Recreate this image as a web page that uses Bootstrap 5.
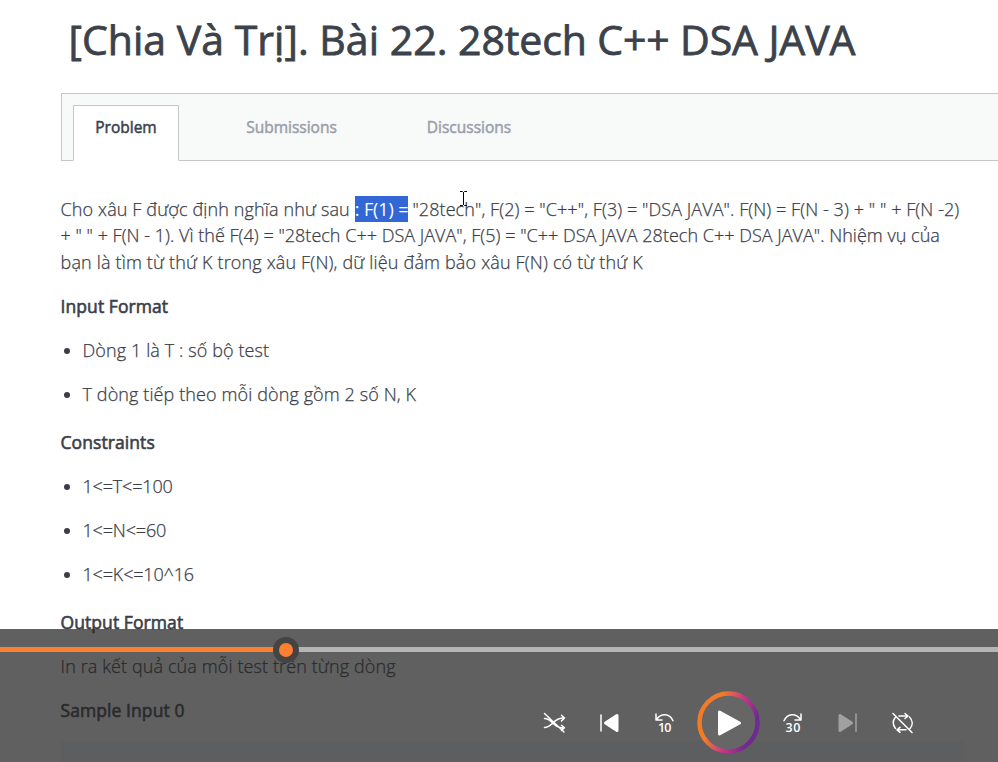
<!DOCTYPE html>
<html lang="vi">
<head>
<meta charset="utf-8">
<meta name="viewport" content="width=device-width, initial-scale=1">
<title>[Chia Và Trị]. Bài 22. 28tech C++ DSA JAVA</title>
<link href="https://cdn.jsdelivr.net/npm/bootstrap@5.3.0/dist/css/bootstrap.min.css" rel="stylesheet">
<style>
body{font-family:"Open Sans","Noto Sans",sans-serif;color:#3b3e48;width:998px;height:762px;overflow:hidden;background:#fff}
.page-title{font-size:41px;line-height:56px;font-weight:400;letter-spacing:-.12px;-webkit-text-stroke:.8px #3c424b;padding:11px 0 0 68.500px;height:93px;color:#3c424b}
.title-start{letter-spacing:.02px}
.tab-strip{margin-left:61px;height:68px;background:#f8f9f9;border:1px solid #c4c6ca;border-right:0;padding:11px 0 0 11px}
.tab-strip .nav-link{font-size:15.5px;line-height:22px;font-weight:400;-webkit-text-stroke:.5px;color:#9a9fab;border-radius:0;border:1px solid transparent;padding:10px 0 0;height:56px;text-align:center;margin:0}
.tab-strip .nav-link.active{color:#39424e;border-color:#c4c6ca #c4c6ca #fff;background:#fff}
.tab-a{width:106px}.tab-b{width:225px}.tab-c{width:130px}
.statement{padding:35px 0 0 60.500px;font-size:18px;font-weight:300;line-height:26.4px;-webkit-text-stroke:.25px}
.statement p{margin:0;white-space:nowrap}
.statement h2{font-size:17.5px;font-weight:400;line-height:26px;margin:0;-webkit-text-stroke:.6px;letter-spacing:.08px}
.statement ul{padding-left:22px;margin:0}
.statement li{height:44px;line-height:26px}
.l1{letter-spacing:.075px}
.lead-in{letter-spacing:.13px}
.l2{letter-spacing:.02px}
.l3{letter-spacing:.165px}
.viet{letter-spacing:.11px}
.limits{letter-spacing:-.16px}
.picked{background:#3367d6;color:#fff;display:inline-block;width:53px;height:26px;line-height:26px;vertical-align:top;font-weight:400;letter-spacing:-.1px;-webkit-text-stroke:0}
.code-box{width:903px;height:40px;background:#f3f7fc}
.player{left:0;top:629px;width:998px;height:133px;background:rgba(34,34,34,.72)}
.track{margin-top:18px;height:5px;background:#b5b5b5}
.played{height:5px;background:#ff7f30}
.knob{width:26px;height:26px;border-radius:50%;background:#ff7f30;border:6.5px solid #444;left:272.5px;top:7.5px}
.controls{padding:39px 0 0 542px}
.ico{fill:none;stroke:#fff;stroke-width:1.5;stroke-linecap:round;stroke-linejoin:round}
.ico text{font:600 12.500px "Open Sans",sans-serif;fill:#fff;stroke:none}
.beam{left:459px;top:190px}
</style>
<script src="https://cdn.jsdelivr.net/npm/bootstrap@5.3.0/dist/js/bootstrap.bundle.min.js"></script>
</head>
<body class="position-relative">
<h1 class="page-title m-0 text-nowrap"><span class="title-start">[Chia Và Trị]. Bài 22. </span>28tech C++ DSA JAVA</h1>
<nav class="nav tab-strip flex-nowrap">
<a class="nav-link active tab-a" href="#">Problem</a>
<a class="nav-link tab-b" href="#">Submissions</a>
<a class="nav-link tab-c" href="#">Discussions</a>
</nav>
<main class="statement">
<p class="l1"><span class="lead-in">Cho xâu F được định nghĩa như sau </span><span class="picked">: F(1) =</span> "28tech", F(2) = "C++", F(3) = "DSA JAVA". F(N) = F(N - 3) + " " + F(N -2)</p>
<p class="l2">+ " " + F(N - 1). Vì thế F(4) = "28tech C++ DSA JAVA", F(5) = "C++ DSA JAVA 28tech C++ DSA JAVA". Nhiệm vụ của</p>
<p class="l3">bạn là tìm từ thứ K trong xâu F(N), dữ liệu đảm bảo xâu F(N) có từ thứ K</p>
<h2 style="margin:18px 0">Input Format</h2>
<ul class="viet"><li>Dòng 1 là T : số bộ test</li><li>T dòng tiếp theo mỗi dòng gồm 2 số N, K</li></ul>
<h2 style="margin:4px 0 18px">Constraints</h2>
<ul class="limits"><li>1&lt;=T&lt;=100</li><li>1&lt;=N&lt;=60</li><li>1&lt;=K&lt;=10^16</li></ul>
<h2 style="margin:4px 0 18px">Output Format</h2>
<p class="viet">In ra kết quả của mỗi test trên từng dòng</p>
<h2 style="margin:17px 0 18px">Sample Input 0</h2>
<div class="code-box"></div>
</main>
<svg class="beam position-absolute" width="9" height="18" viewBox="0 0 9 18" fill="none" stroke="#000" stroke-width="1"><path d="M1 1.5h2.5l1 1 1-1H8M4.500 2v13M1 15.500h2.500l1-1 1 1H8"/></svg>
<section class="player position-absolute">
<div class="track"><div class="played" style="width:285px"></div></div>
<div class="knob position-absolute"></div>
<div class="controls d-flex align-items-center">
<svg class="ico" width="26" height="26" viewBox="542 710 26 26"><path d="M544.500 718.500c8 0 8 9 18 9.200M544.500 727.500c8 0 8-9 18-9.500M561.500 715.300l3 2.700-3 2.900M561.500 725.200l3 2.600-3 2.600M544.500 713.500l19.500 18.500"/></svg>
<svg class="ico" width="68" height="26" viewBox="568 710 68 26"><path d="M601 714.500v17" stroke-linecap="butt"/><path d="M617 715.500v15l-11.500-7.500z" fill="#fff" stroke-width="3"/></svg>
<svg class="ico" width="60" height="26" viewBox="636 710 60 26"><path d="M656 714v6h6M656.500 719.500c4.500-6.500 13-6.500 16.500 1.200"/><text x="658" y="732.300" textLength="13.500">10</text></svg>
<svg class="ico" width="64" height="64" viewBox="696 691 64 64"><defs><linearGradient id="ring" x1="0" y1=".3" x2="1" y2=".7"><stop offset=".25" stop-color="#f47b25"/><stop offset=".58" stop-color="#c83688"/><stop offset=".9" stop-color="#702a90"/></linearGradient></defs><circle cx="728.500" cy="722.500" r="29" fill="#666" stroke="url(#ring)" stroke-width="4.500"/><path d="M719.500 712v22l20-11z" fill="#fff" stroke-width="3"/></svg>
<svg class="ico" width="60" height="26" viewBox="760 710 60 26"><path d="M801 714v6h-6M800.500 719.500c-4.500-6.500-13-6.500-16.500 1.200"/><text x="785.500" y="732.300" textLength="15">30</text></svg>
<svg class="ico" width="60" height="26" viewBox="820 710 60 26"><path d="M840 715.500v15l11.500-7.500z" style="fill:#a0a0a0;stroke:#a0a0a0;stroke-width:3"/><path d="M856 714v17.500" style="stroke:#a0a0a0"/></svg>
<svg class="ico" width="34" height="26" viewBox="880 710 34 26"><path d="M899 716h8.500M905 713.500l3 2.500-3 2.500M909.500 717c3.500 3.500 3.500 8 .5 11.500M906 729.800h-8.500M900 727.300l-3 2.500 3 2.500M895.500 728.500c-3-3.500-3-8-.2-11M893 713.500l19 19"/></svg>
</div>
</section>
</body>
</html>
